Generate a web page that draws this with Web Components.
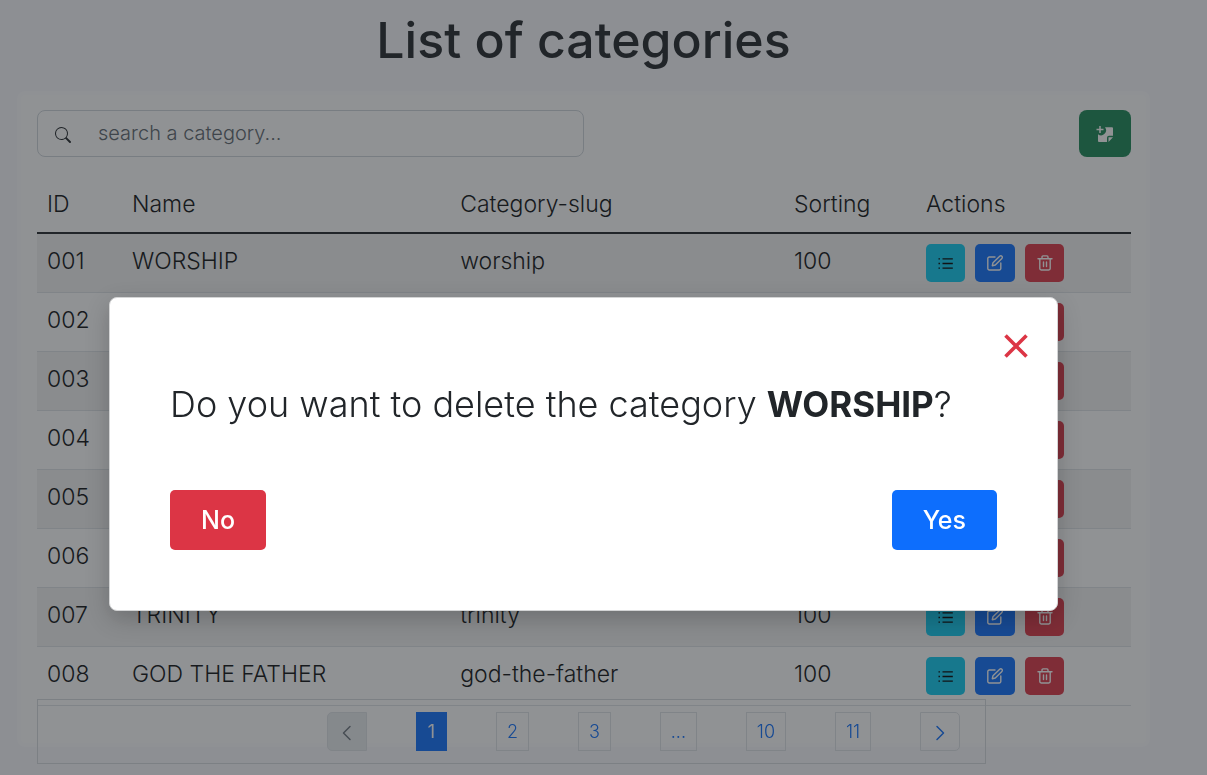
<!DOCTYPE html>
<html lang="en">
<head>
<meta charset="utf-8">
<meta name="viewport" content="width=device-width, initial-scale=1">
<title>List of categories</title>
<style>
html { background: #f8f8fc; }
body {
  margin: 0;
  font-family: Inter, "Open Sans", sans-serif;
  font-weight: 300;
  font-size: 23px;
  line-height: 35px;
  color: #212529;
}
</style>
</head>
<body>
<categories-page>
  <search-bar slot="tools"></search-bar>
  <category-table></category-table>
  <page-nav slot="footer"></page-nav>
</categories-page>
<confirm-dialog>Do you want to delete the category <strong>WORSHIP</strong>?</confirm-dialog>

<script>
const ICONS = {
  search: '<path d="M11.742 10.344a6.5 6.5 0 1 0-1.397 1.398h-.001c.03.04.062.078.098.115l3.85 3.85a1 1 0 0 0 1.415-1.414l-3.85-3.85a1.007 1.007 0 0 0-.115-.1zM12 6.5a5.5 5.5 0 1 1-11 0 5.5 5.5 0 0 1 11 0z"/>',
  list: '<path d="M4.800 3h11M4.800 8h11M4.800 13h11M.5 3h1.600M.5 8h1.600M.5 13h1.600" fill="none" stroke="currentColor" stroke-width="1.400"/>',
  edit: '<path d="M8 2H2.300A1.500 1.500 0 0 0 .8 3.500v10A1.500 1.500 0 0 0 2.300 15h10a1.500 1.500 0 0 0 1.500-1.500V8M12.700 1.200a1.500 1.500 0 0 1 2.200 2.200L8.300 10l-3 .7.7-3z" fill="none" stroke="currentColor" stroke-width="1.400" stroke-linejoin="round" stroke-linecap="round"/>',
  trash: '<path d="M1 3.700h14M5 3.500V1.900A1 1 0 0 1 6 .9h4a1 1 0 0 1 1 1v1.600M2.800 3.900v9.700A1.400 1.400 0 0 0 4.200 15h7.600a1.400 1.400 0 0 0 1.400-1.400V3.900M6.500 7v4.600M9.500 7v4.600" fill="none" stroke="currentColor" stroke-width="1.400" stroke-linecap="round" stroke-linejoin="round"/>',
  note: '<path d="M3 0v7M-.5 3.500h7" stroke="currentColor" stroke-width="1.500" fill="none"/><path d="M8 1.200h7a1 1 0 0 1 1 1v7.600h-4a2 2 0 0 0-2 2V16H2a1 1 0 0 1-1-1V8.200a5 5 0 0 0 7-7z"/><path d="M11.500 16v-4.700H16z"/>',
  left: '<path d="M11 1.500 4.500 8l6.500 6.500" fill="none" stroke="currentColor" stroke-width="1.500" stroke-linecap="round" stroke-linejoin="round"/>',
  right: '<path d="M5 1.500 11.500 8 5 14.500" fill="none" stroke="currentColor" stroke-width="1.500" stroke-linecap="round" stroke-linejoin="round"/>',
  close: '<path d="M1 1l14 14M15 1 1 15" fill="none" stroke="currentColor" stroke-width="2.400"/>'
};

const define = (name, html, setup) => customElements.define(name, class extends HTMLElement {
  constructor() {
    super();
    const template = document.createElement('template');
    template.innerHTML = html;
    this.attachShadow({ mode: 'open' }).append(template.content.cloneNode(true));
  }
  connectedCallback() { if (setup) setup(this, this.shadowRoot); }
});

define('line-icon', `
<style>
:host { display: block; width: var(--icon-size, 16px); height: var(--icon-size, 16px); }
svg { display: block; width: 100%; height: 100%; overflow: visible; }
</style>
<svg viewBox="0 0 16 16" fill="currentColor" aria-hidden="true"></svg>`,
  (host, root) => { root.querySelector('svg').innerHTML = ICONS[host.getAttribute('name')]; });

define('categories-page', `
<style>
:host { display: block; padding: 10px 57px 28px 17px; }
h1 { margin: 0 0 21px; text-align: center; font-size: 50px; line-height: 60px; font-weight: 500; }
.card { background: #fff; border-radius: 8px; border: 4px solid #fcfcff; padding: 15px 15px 37px 16px; }
</style>
<h1>List of categories</h1>
<main class="card">
  <slot name="tools"></slot>
  <slot></slot>
</main>
<slot name="footer"></slot>`);

define('search-bar', `
<style>
:host { display: flex; justify-content: space-between; }
label {
  display: flex; align-items: center; box-sizing: border-box;
  width: 50%; height: 47px; border: 1px solid #ced4da; border-radius: 8px; overflow: hidden;
}
line-icon { margin: 2px 17px 0; }
input {
  flex: 1; min-width: 0; border: 0; outline: 0; background: none; padding: 0 10px;
  font: inherit; font-size: 20px; color: inherit;
}
input::placeholder { color: #5c656d; opacity: 1; }
button {
  display: grid; place-items: center; width: 52px; height: 47px; padding: 0;
  border: 0; border-radius: 8px; background: #198754; color: #fff;
}
button line-icon { margin: 0; }
</style>
<label><line-icon name="search"></line-icon><input type="text" aria-label="Search a category" placeholder="search a category..."></label>
<button type="button" aria-label="Add a category"><line-icon name="note"></line-icon></button>`);

define('category-actions', `
<style>
:host { display: flex; gap: 10px; }
button {
  display: grid; place-items: center; width: 39px; height: 38px; padding: 0;
  border: 0; border-radius: 5px; color: #fff;
}
.show { background: #0dcaf0; color: #000; }
.edit { background: #0d6efd; width: 40px; }
.delete { background: #dc3545; }
.show line-icon { --icon-size: 15px; }
</style>
<button class="show" type="button" aria-label="Show"><line-icon name="list"></line-icon></button>
<button class="edit" type="button" aria-label="Edit"><line-icon name="edit"></line-icon></button>
<button class="delete" type="button" aria-label="Delete"><line-icon name="trash"></line-icon></button>`);

define('category-table', `
<style>
:host { display: block; margin-top: 20px; color: #0c0e10; }
table { width: 100%; table-layout: fixed; border-collapse: separate; border-spacing: 0; }
th, td { padding: 10px; text-align: left; font-weight: 300; vertical-align: top; height: 38px; border-bottom: 1px solid #dee2e6; }
th { height: 34px; border-bottom: 2px solid #212529; }
td { line-height: 34px; }
tbody tr:nth-child(odd) { background: #f2f2f2; }
.id { width: 65px; }
.name { width: 30%; box-sizing: border-box; }
.sort { width: 112px; }
.act { width: 195px; }
</style>
<table>
  <thead><tr><th class="id">ID</th><th class="name">Name</th><th>Category-slug</th><th class="sort">Sorting</th><th class="act">Actions</th></tr></thead>
  <tbody></tbody>
</table>`,
  (host, root) => {
    const rows = [
      ['001', 'WORSHIP', 'worship', '100'], ['002', '', '', ''], ['003', '', '', ''], ['004', '', '', ''],
      ['005', '', '', ''], ['006', '', '', ''], ['007', 'TRINITY', 'trinity', '100'],
      ['008', 'GOD THE FATHER', 'god-the-father', '100']
    ];
    root.querySelector('tbody').innerHTML = rows.map(row =>
      '<tr>' + row.map(cell => `<td>${cell}</td>`).join('') + '<td><category-actions></category-actions></td></tr>').join('');
  });

define('page-nav', `
<style>
:host {
  position: fixed; left: 37px; right: 221px; bottom: 11px; box-sizing: border-box; height: 65px;
  border: 1px solid #d6dade;
}
nav { display: flex; justify-content: space-between; padding: 12px 25px 0 289px; }
a {
  box-sizing: border-box; height: 39px; padding: 0 10px; border: 1px solid #dee2e6;
  font-size: 18px; line-height: 36px; color: #0d6efd; text-decoration: none;
  display: flex; align-items: center;
}
.prev, .next { padding: 3px 11px 0; }
.prev { background: #e9ecef; color: #6c757d; border-radius: 5px 0 0 5px; }
.next { border-radius: 0 5px 5px 0; }
.current { padding: 0 11px; background: #0d6efd; border-color: #0d6efd; color: #fff; font-weight: 400; }
</style>
<nav aria-label="Pages">
  <a class="prev" href="#" aria-label="Previous"><line-icon name="left"></line-icon></a>
  <a class="current" href="#" aria-current="page">1</a>
  <a href="#">2</a>
  <a href="#">3</a>
  <a href="#">...</a>
  <a href="#">10</a>
  <a href="#">11</a>
  <a class="next" href="#" aria-label="Next"><line-icon name="right"></line-icon></a>
</nav>`);

define('confirm-dialog', `
<style>
:host {
  position: fixed; inset: 0; box-sizing: border-box; padding: 133px 149px 0 109px;
  display: flex; align-items: center; background: rgba(33, 37, 41, .5);
}
dialog {
  position: static; box-sizing: border-box; flex: 1; margin: 0; padding: 36px 60px 60px;
  border: 1px solid #d3d4d5; border-radius: 8px; background: #fff; color: inherit;
  box-shadow: 0 8px 24px rgba(0, 0, 0, .2);
}
header { display: flex; justify-content: flex-end; margin-right: -31px; }
.close { padding: 0; border: 0; background: none; color: #dc3545; --icon-size: 24px; }
p { margin: 23px 0 63px; font-size: 36px; line-height: 46px; }
footer { display: flex; justify-content: space-between; }
.answer {
  height: 60px; padding: 0 31px; border: 0; border-radius: 5px;
  font: inherit; font-size: 25px; font-weight: 500; color: #fff;
}
.no { background: #dc3545; }
.yes { background: #0d6efd; }
::slotted(strong) { font-size: 35px; font-weight: 700; }
</style>
<dialog open>
  <header><button class="close" type="button" aria-label="Close"><line-icon name="close"></line-icon></button></header>
  <p><slot></slot></p>
  <footer><button class="answer no" type="button">No</button><button class="answer yes" type="button">Yes</button></footer>
</dialog>`);
</script>
</body>
</html>
